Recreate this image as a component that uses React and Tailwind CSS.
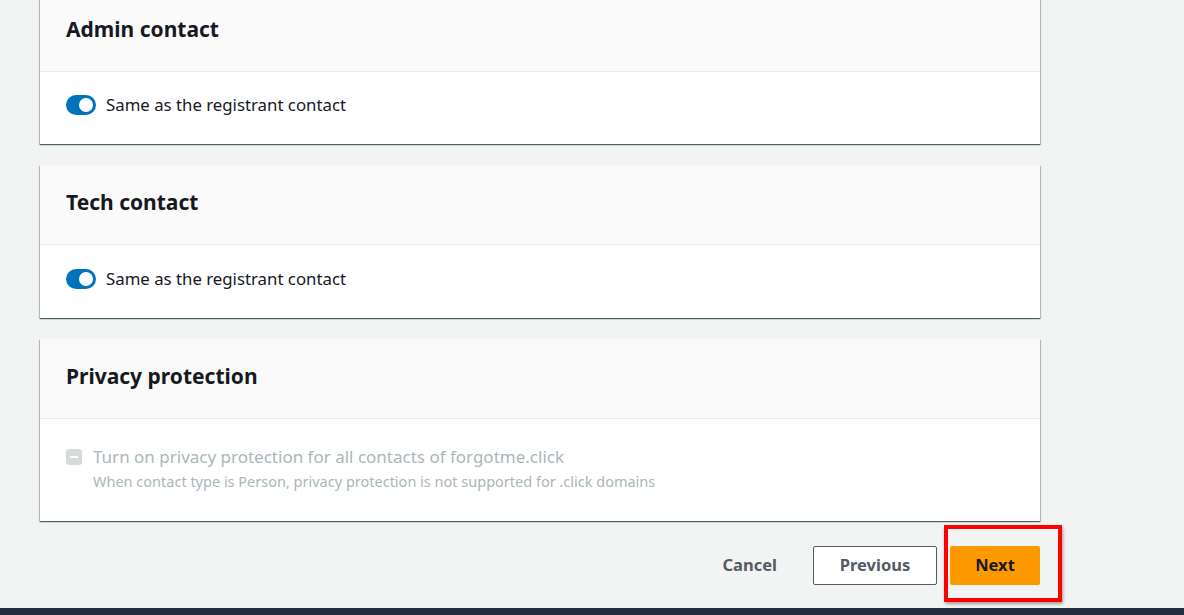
import { Minus } from "lucide-react"

function Toggle() {
  return (
    <span className="relative inline-flex h-[20px] w-[30px] shrink-0 items-center rounded-full bg-[#0073bb]">
      <span className="absolute right-[3px] h-[14px] w-[14px] rounded-full bg-white" />
    </span>
  )
}

function Card({ title, children, className = "" }) {
  return (
    <section
      className={`bg-white shadow-[0_1px_1px_0_rgba(0,28,36,0.5),1px_1px_1px_0_rgba(0,28,36,0.2),-1px_1px_1px_0_rgba(0,28,36,0.2)] ${className}`}
    >
      <div className="flex h-[80px] items-center border-b border-[#eaeded] bg-[#fafafa] px-[26px] pb-[4px]">
        <h2 className="text-[21px] font-bold text-[#16191f]">{title}</h2>
      </div>
      {children}
    </section>
  )
}

export default function App() {
  return (
    <div
      className="flex h-[615px] flex-col overflow-hidden bg-[#f2f3f3]"
      style={{ fontFamily: '"Noto Sans", Arial, sans-serif' }}
    >
      <div className="flex flex-1 flex-col gap-[21px] pl-[40px] pr-[144px]">
        <Card title="Admin contact" className="-mt-[8px]">
          <div className="flex h-[72px] items-center gap-[10px] px-[26px] pb-[6px]">
            <Toggle />
            <span className="text-[16.8px] text-[#16191f]">Same as the registrant contact</span>
          </div>
        </Card>

        <Card title="Tech contact">
          <div className="flex h-[73px] items-center gap-[10px] px-[26px] pb-[6px]">
            <Toggle />
            <span className="text-[16.8px] text-[#16191f]">Same as the registrant contact</span>
          </div>
        </Card>

        <Card title="Privacy protection">
          <div className="flex h-[102px] items-start gap-[11px] px-[26px] pt-[26px]">
            <span className="mt-[4px] flex h-[16px] w-[16px] shrink-0 items-center justify-center rounded-[3px] bg-[#d5dbdb]">
              <Minus className="h-[12px] w-[12px] text-white" strokeWidth={3.5} />
            </span>
            <div className="flex flex-col">
              <span className="text-[17px] leading-[24px] text-[#aab7b8]">
                Turn on privacy protection for all contacts of forgotme.click
              </span>
              <span className="text-[14.5px] leading-[24px] text-[#aab7b8]">
                When contact type is Person, privacy protection is not supported for .click domains
              </span>
            </div>
          </div>
        </Card>

        <div className="flex items-center justify-end pt-[4px]">
          <button className="px-[20px] text-[16.5px] font-bold text-[#545b64]">Cancel</button>
          <button className="ml-[16px] h-[39px] w-[124px] rounded-[2px] border border-[#545b64] bg-white text-[16.5px] font-bold text-[#545b64]">
            Previous
          </button>
          <div className="relative ml-[13px]">
            <button className="h-[39px] w-[90px] rounded-[2px] bg-[#ff9900] text-[16.5px] font-bold text-[#16191f]">
              Next
            </button>
            <span className="pointer-events-none absolute -left-[6px] -top-[21px] h-[77px] w-[118px] border-[4px] border-[#ff0000] shadow-[1px_2px_3px_rgba(0,0,0,0.35)]" />
          </div>
        </div>
      </div>
      <div className="h-[7px] bg-[#232f3e]" />
    </div>
  )
}
